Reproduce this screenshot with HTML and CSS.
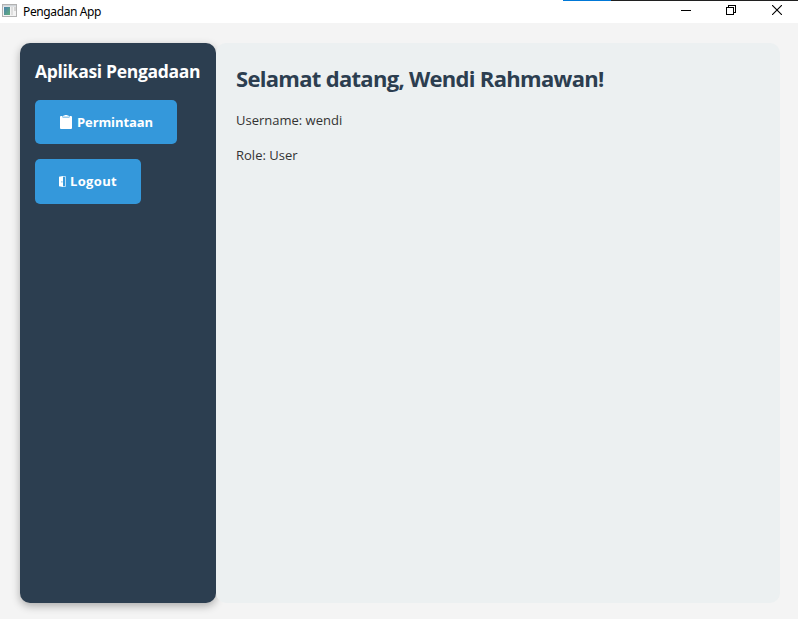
FILE: index.html
```html
<!DOCTYPE html>
<html lang="id">
<head>
<meta charset="utf-8">
<title>Pengadan App</title>
<link rel="stylesheet" href="styles.css">
</head>
<body>
<div class="window">
  <header class="titlebar">
    <svg class="app-icon" width="16" height="14" viewBox="0 0 16 14">
      <defs><linearGradient id="g" x1="0" y1="0" x2="1" y2="1"><stop offset="0" stop-color="#4a80ad"/><stop offset="1" stop-color="#63b07c"/></linearGradient></defs>
      <rect x=".5" y=".5" width="14" height="12" fill="#f3f3f3" stroke="#b2b2b2"/>
      <rect x="1" y="1" width="13" height="1.5" fill="#d0d4d8"/>
      <rect x="2" y="3" width="6" height="8" fill="url(#g)"/>
      <rect x="9" y="3" width="2" height="8" fill="#dedede"/>
      <rect x="12" y="3" width="2" height="4" fill="#d4d4d4"/>
    </svg>
    <span class="app-title">Pengadan App</span>
    <div class="controls">
      <svg width="10" height="10" viewBox="0 0 10 10" shape-rendering="crispEdges"><path d="M0 5.5h10" stroke="#000"/></svg>
      <svg width="10" height="10" viewBox="0 0 10 10" shape-rendering="crispEdges" fill="none" stroke="#000"><path d="M.5 2.5h7v7h-7zM2.5 2.5v-2h7v7h-2"/></svg>
      <svg class="close" width="10" height="10" viewBox="0 0 10 10" fill="none" stroke="#000" stroke-width="1.1"><path d="M0 0l10 10M10 0L0 10"/></svg>
    </div>
    <div class="edge"></div>
  </header>
  <div class="workspace">
    <nav class="sidebar">
      <h2 class="brand">Aplikasi Pengadaan</h2>
      <button class="nav-button permintaan">
        <svg width="12" height="14" viewBox="0 0 12 14"><path d="M1 1h1.5v1.5h7V1H11a1 1 0 0 1 1 1v11a1 1 0 0 1-1 1H1a1 1 0 0 1-1-1V2a1 1 0 0 1 1-1z" fill="#fff"/><path d="M3 1.8V.8C4 .8 4.400 0 6 0s2 .8 3 .8v1z" fill="#fff"/></svg>
        <span>Permintaan</span>
      </button>
      <button class="nav-button logout">
        <svg width="7" height="11" viewBox="0 0 7 11"><path d="M0 .8L4 0v11l-4-.8z" fill="#fff"/><path d="M2.900 5v1.600" stroke="#3498db" stroke-width=".7"/><path d="M4 .5h2.500v10H4" fill="none" stroke="#d5eafa" stroke-width=".8"/></svg>
        <span>Logout</span>
      </button>
    </nav>
    <main class="content">
      <h1 class="welcome">Selamat datang, Wendi Rahmawan!</h1>
      <p class="username">Username: wendi</p>
      <p class="role">Role: User</p>
    </main>
  </div>
</div>
</body>
</html>
```
FILE: styles.css
```css
* { box-sizing: border-box; }

body {
  margin: 0;
  font-family: "Open Sans", "Noto Sans", sans-serif;
}

.window {
  width: 798px;
  height: 619px;
  display: flex;
  flex-direction: column;
  background: #f4f4f4;
  overflow: hidden;
}

.titlebar {
  position: relative;
  height: 23px;
  flex: none;
  display: flex;
  align-items: flex-start;
  padding: 4px 16px 0 2px;
  background: #fff;
}

.app-icon { display: block; flex: none; }

.app-title {
  margin-left: 5px;
  font-family: "Noto Sans", sans-serif;
  font-size: 12px;
  line-height: 16px;
  letter-spacing: -0.38px;
  color: #000;
  white-space: nowrap;
}

.controls {
  display: flex;
  gap: 35px;
  margin: 1px 0 0 auto;
}

.controls svg { display: block; }

.controls .close { margin-left: 1px; }

.edge {
  position: absolute;
  top: 0;
  right: 0;
  width: 235px;
  height: 1px;
  background: linear-gradient(90deg, #0078d7 48px, #202020 48px);
}

.workspace {
  flex: 1;
  display: flex;
  padding: 20px 18px 16px 20px;
}

.sidebar {
  width: 196px;
  display: flex;
  flex-direction: column;
  align-items: flex-start;
  gap: 15px;
  padding: 15px;
  border-radius: 10px;
  background: #2c3e50;
  box-shadow: 0 3px 9px rgba(0, 0, 0, 0.3);
}

.brand {
  margin: 0;
  height: 27px;
  font-size: 17.5px;
  font-weight: 700;
  line-height: 27px;
  letter-spacing: -0.31px;
  color: #fff;
  white-space: nowrap;
}

.nav-button {
  display: flex;
  align-items: center;
  border: 0;
  border-radius: 5px;
  background: #3498db;
  color: #fff;
  font: 700 13px/20px "Open Sans", sans-serif;
  white-space: nowrap;
}

.permintaan {
  width: 142px;
  height: 44px;
  padding: 0 0 0 25px;
  gap: 5px;
  letter-spacing: -0.1px;
}

.logout {
  width: 106px;
  height: 45px;
  padding: 0 0 1px 24px;
  gap: 4px;
  letter-spacing: 0.35px;
}

.content {
  flex: 1;
  position: relative;
  padding: 20px;
  border-radius: 10px;
  background: #ecf0f1;
  color: #333;
}

.welcome {
  margin: 0;
  font-size: 22px;
  font-weight: 700;
  line-height: 31px;
  letter-spacing: -0.7px;
  color: #2c3e50;
  white-space: nowrap;
}

.username, .role {
  margin: 15px 0 0;
  font-size: 13px;
  line-height: 20px;
}

.username { margin-top: 16px; }
```
